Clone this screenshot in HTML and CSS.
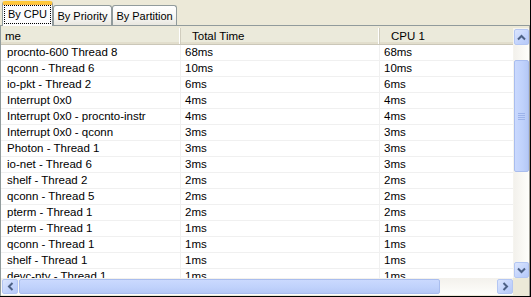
FILE: index.html
```html
<!DOCTYPE html>
<html>
<head>
<meta charset="utf-8">
<link rel="stylesheet" href="styles.css">
</head>
<body>
<div class="win">
  <div class="tabs">
    <div class="tab active"><span class="focus">By CPU</span></div>
    <div class="tab t2">By Priority</div>
    <div class="tab t3">By Partition</div>
  </div>
  <div class="pane">
    <div class="grid">
      <div class="list">
        <div class="hdr">
          <div class="hc c1">me</div>
          <div class="hc c2">Total Time</div>
          <div class="hc c3">CPU 1</div>
        </div>
        <div class="rows">
          <div class="row"><div class="cell c1">procnto-600 Thread 8</div><div class="cell c2">68ms</div><div class="cell c3">68ms</div></div>
          <div class="row"><div class="cell c1">qconn - Thread 6</div><div class="cell c2">10ms</div><div class="cell c3">10ms</div></div>
          <div class="row"><div class="cell c1">io-pkt - Thread 2</div><div class="cell c2">6ms</div><div class="cell c3">6ms</div></div>
          <div class="row"><div class="cell c1">Interrupt 0x0</div><div class="cell c2">4ms</div><div class="cell c3">4ms</div></div>
          <div class="row"><div class="cell c1">Interrupt 0x0 - procnto-instr</div><div class="cell c2">4ms</div><div class="cell c3">4ms</div></div>
          <div class="row"><div class="cell c1">Interrupt 0x0 - qconn</div><div class="cell c2">3ms</div><div class="cell c3">3ms</div></div>
          <div class="row"><div class="cell c1">Photon - Thread 1</div><div class="cell c2">3ms</div><div class="cell c3">3ms</div></div>
          <div class="row"><div class="cell c1">io-net - Thread 6</div><div class="cell c2">3ms</div><div class="cell c3">3ms</div></div>
          <div class="row"><div class="cell c1">shelf - Thread 2</div><div class="cell c2">2ms</div><div class="cell c3">2ms</div></div>
          <div class="row"><div class="cell c1">qconn - Thread 5</div><div class="cell c2">2ms</div><div class="cell c3">2ms</div></div>
          <div class="row"><div class="cell c1">pterm - Thread 1</div><div class="cell c2">2ms</div><div class="cell c3">2ms</div></div>
          <div class="row"><div class="cell c1">pterm - Thread 1</div><div class="cell c2">1ms</div><div class="cell c3">1ms</div></div>
          <div class="row"><div class="cell c1">qconn - Thread 1</div><div class="cell c2">1ms</div><div class="cell c3">1ms</div></div>
          <div class="row"><div class="cell c1">shelf - Thread 1</div><div class="cell c2">1ms</div><div class="cell c3">1ms</div></div>
          <div class="row"><div class="cell c1">devc-pty - Thread 1</div><div class="cell c2">1ms</div><div class="cell c3">1ms</div></div>
        </div>
      </div>
      <div class="vscroll">
        <div class="btn"><svg width="9" height="7" viewBox="0 0 9 7"><polyline points="1,5.5 4.5,2 8,5.5" fill="none" stroke="#4D6185" stroke-width="2"/></svg></div>
        <div class="vtrack">
          <div class="vgap"></div>
          <div class="vthumb"><svg width="7" height="7" viewBox="0 0 7 7"><path d="M0 0.5H7M0 2.5H7M0 4.5H7M0 6.5H7" stroke="#9DB3EA" stroke-width="1"/></svg></div>
        </div>
        <div class="btn"><svg width="9" height="7" viewBox="0 0 9 7"><polyline points="1,1.5 4.5,5 8,1.5" fill="none" stroke="#4D6185" stroke-width="2"/></svg></div>
      </div>
      <div class="hscroll">
        <div class="btn"><svg width="7" height="9" viewBox="0 0 7 9"><polyline points="5.5,1 2,4.5 5.5,8" fill="none" stroke="#4D6185" stroke-width="2"/></svg></div>
        <div class="htrack"><div class="hthumb"></div></div>
        <div class="btn"><svg width="7" height="9" viewBox="0 0 7 9"><polyline points="1.5,1 5,4.5 1.5,8" fill="none" stroke="#4D6185" stroke-width="2"/></svg></div>
      </div>
      <div class="corner"></div>
    </div>
  </div>
</div>
</body>
</html>
```
FILE: styles.css
```css
* { box-sizing: border-box; }
html, body { margin: 0; padding: 0; }
body {
  font-family: "Liberation Sans", Arial, sans-serif;
  font-size: 11.5px;
  color: #000;
  background: #ECE9D8;
}
.win {
  width: 531px;
  height: 297px;
  background: #ECE9D8;
  border-right: 1px solid #000;
  border-bottom: 1px solid #000;
  overflow: hidden;
}
.tabs {
  height: 25px;
  display: flex;
  align-items: flex-end;
  padding-left: 2px;
  font-size: 11px;
}
.tab {
  height: 20px;
  border: 1px solid #919B9C;
  border-bottom: none;
  border-radius: 3px 3px 0 0;
  background: linear-gradient(#FFFFFF, #F7F7F4 55%, #E9E7DF);
  display: flex;
  align-items: center;
  justify-content: center;
  white-space: nowrap;
  padding-top: 1px;
}
.t2 { width: 59px; }
.t3 { width: 65px; }
.tab.active {
  width: 51px;
  height: 25px;
  margin-bottom: -1px;
  position: relative;
  z-index: 2;
  background: #FCFCFE;
  border-top: 3px solid #FFC83C;
  box-shadow: inset 0 1px 0 #F8B94A;
  align-items: flex-start;
  padding-top: 1px;
}
.focus {
  border: 1px dotted #000;
  padding: 1px 3px 2px 3px;
  line-height: 14px;
}
.pane {
  height: 272px;
  border-top: 1px solid #919B9C;
  border-left: 1px solid #919B9C;
  border-right: 1px solid #9B9A92;
  border-bottom: 1px solid #6E6D66;
  padding-top: 2px;
  background: #ECE9D8;
}
.grid {
  display: grid;
  grid-template-columns: 512px 16px;
  grid-template-rows: 250px 17px;
  background: #fff;
}
.list {
  overflow: hidden;
  background: #fff;
}
.hdr {
  height: 17px;
  display: flex;
  background: #EBEADB;
  border-bottom: 1px solid #CBC7B8;
  box-shadow: inset 0 -2px 0 #E2DECD, inset 0 -1px 0 #D6D2C2;
}
.hc {
  line-height: 16px;
  white-space: nowrap;
  overflow: hidden;
  border-right: 1px solid #D0CDBE;
  box-shadow: inset -1px 0 0 #FFFFFF;
}
.hdr .c1 { padding-left: 4px; }
.hdr .c2 { padding-left: 11px; }
.hdr .c3 { padding-left: 11px; border-right: none; box-shadow: none; }
.c1 { width: 180px; flex: none; }
.c2 { width: 199px; flex: none; }
.c3 { width: 133px; flex: none; }
.row {
  display: flex;
  height: 16px;
  border-bottom: 1px solid #F0F0F0;
}
.cell {
  line-height: 15px;
  white-space: nowrap;
  overflow: hidden;
  border-right: 1px solid #F0F0F0;
}
.row .c1 { padding-left: 6px; }
.row .c2 { padding-left: 4px; }
.row .c3 { padding-left: 4px; border-right: none; }

.vscroll {
  display: flex;
  flex-direction: column;
  background: #F5F4EF;
  padding: 1px 0 0 1px;
}
.btn {
  width: 15px;
  height: 16px;
  flex: none;
  background: linear-gradient(135deg, #DCE6FD, #C2D3FC 60%, #B6C9F8);
  border: 1px solid #B3C6F3;
  border-radius: 2px;
  display: flex;
  align-items: center;
  justify-content: center;
}
.vtrack {
  flex: 1;
  display: flex;
  flex-direction: column;
  background: linear-gradient(90deg, #F3F1EC, #FEFEFB);
}
.vgap { height: 15px; flex: none; }
.vthumb {
  height: 112px;
  width: 15px;
  background: linear-gradient(90deg, #CAD9FE, #BFD1FB 60%, #B5C8F6);
  border: 1px solid #A9BDEE;
  border-radius: 2px;
  display: flex;
  align-items: center;
  justify-content: center;
}
.hscroll {
  display: flex;
  align-items: center;
  padding-left: 1px;
  background: linear-gradient(#F3F1EC, #FEFEFB);
}
.hscroll .btn { width: 16px; height: 15px; }
.htrack {
  flex: 1;
  height: 16px;
  padding: 0 1px;
  display: flex;
  align-items: center;
}
.hthumb {
  width: 421px;
  height: 15px;
  background: linear-gradient(#CAD9FE, #BFD1FB 60%, #B5C8F6);
  border: 1px solid #A9BDEE;
  border-radius: 2px;
}
.corner { background: #ECE9D8; }
```
